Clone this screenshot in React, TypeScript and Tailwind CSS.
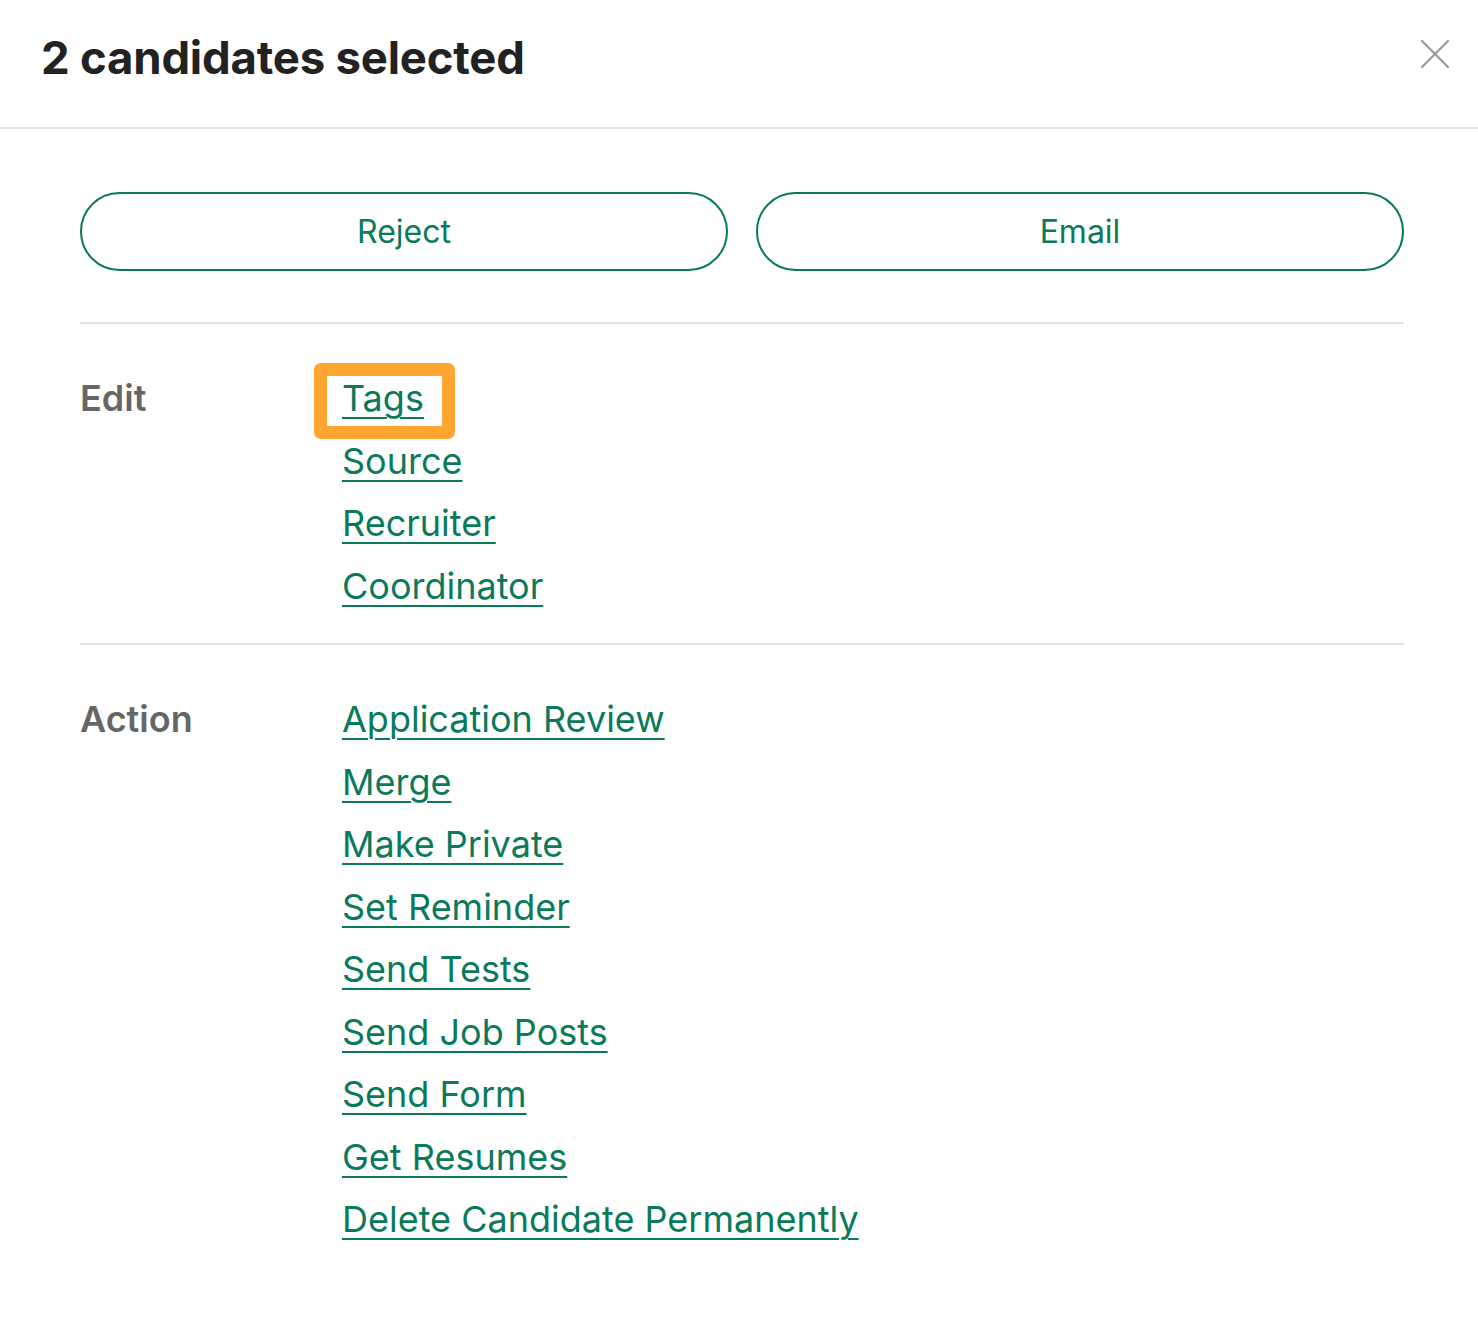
import React from "react";

const editLinks = ["Tags", "Source", "Recruiter", "Coordinator"];
const actionLinks = [
  "Application Review",
  "Merge",
  "Make Private",
  "Set Reminder",
  "Send Tests",
  "Send Job Posts",
  "Send Form",
  "Get Resumes",
  "Delete Candidate Permanently",
];

function LinkItem({ label, highlight }: { label: string; highlight?: boolean }) {
  return (
    <div className="relative h-[62.5px] flex items-center">
      {highlight && (
        <span className="absolute left-[-28px] top-[-6px] w-[141px] h-[76px] border-[13px] border-[#ffa530] rounded-[7px]" />
      )}
      <a
        href="#"
        className="relative text-[36px] leading-[40px] text-[#0a7a5a] underline decoration-2 underline-offset-[6px] mt-[-4px]"
      >
        {label}
      </a>
    </div>
  );
}

function Section({ title, links, className }: { title: string; links: string[]; className?: string }) {
  return (
    <div className={"flex " + (className ?? "")}>
      <div className="w-[262px] h-[62.5px] flex items-center text-[36px] font-semibold text-[#666666] mt-[-2px]">
        {title}
      </div>
      <div className="flex flex-col">
        {links.map((l) => (
          <LinkItem key={l} label={l} highlight={l === "Tags"} />
        ))}
      </div>
    </div>
  );
}

export default function App() {
  return (
    <div
      className="w-[1478px] h-[1322px] bg-white overflow-hidden"
      style={{ fontFamily: "Inter, 'Noto Sans', sans-serif" }}
    >
      <div className="h-[129px] border-b-2 border-[#e3e3e3] flex items-center justify-between pl-[41px] pr-[28px]">
        <h1 className="text-[45.5px] font-bold text-[#222222] tracking-[-0.2px] mt-[-10px]">2 candidates selected</h1>
        <svg width="30" height="30" viewBox="0 0 30 30" className="mt-[-20px]">
          <path d="M2 2 L28 28 M28 2 L2 28" stroke="#999999" strokeWidth="2.2" strokeLinecap="round" />
        </svg>
      </div>
      <div className="pl-[80px] pr-[74px] pt-[63px]">
        <div className="flex gap-[28px]">
          <button className="flex-1 h-[79px] rounded-full border-2 border-[#0a7a5a] text-[32px] text-[#0a7a5a]">
            Reject
          </button>
          <button className="flex-1 h-[79px] rounded-full border-2 border-[#0a7a5a] text-[32px] text-[#0a7a5a]">
            Email
          </button>
        </div>
        <div className="mt-[51px] border-t-2 border-[#e3e3e3]" />
        <Section title="Edit" links={editLinks} className="pt-[45px] pb-[24px]" />
        <div className="border-t-2 border-[#e3e3e3]" />
        <Section title="Action" links={actionLinks} className="pt-[45px]" />
      </div>
    </div>
  );
}
